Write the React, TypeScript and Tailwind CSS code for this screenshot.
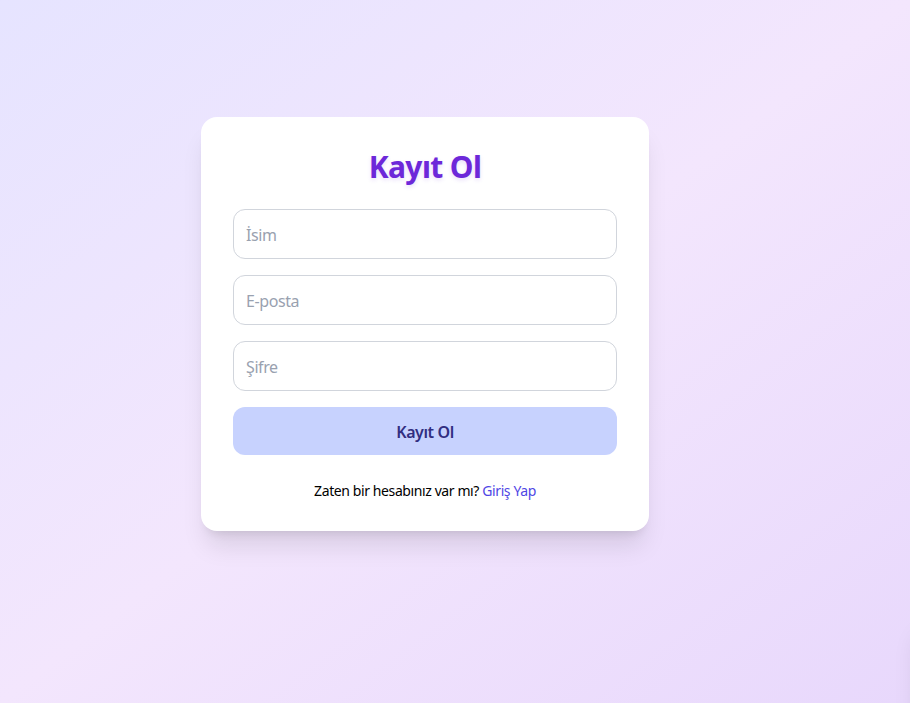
import React from "react";

export default function App() {
  return (
    <div
      className="min-h-screen w-full bg-gradient-to-br from-[#e6e4ff] via-[#f3e6fd] to-[#e8d8fc] flex items-start justify-start pl-[201px] pt-[117px] overflow-hidden relative tracking-[-0.025em]"
      style={{ fontFamily: '"Noto Sans", "Open Sans", sans-serif' }}
    >
      <div className="w-[448px] bg-white rounded-2xl shadow-xl px-8 pt-8 pb-[30px]">
        <h1 className="text-3xl leading-9 font-bold text-center text-[#6d28d9] mb-6 tracking-[-0.02em] [text-shadow:0_2px_4px_rgba(109,40,217,0.15)]">
          Kayıt Ol
        </h1>
        <form className="flex flex-col gap-4" onSubmit={(e) => e.preventDefault()}>
          <input
            type="text"
            placeholder="İsim"
            className="w-full border border-gray-300 rounded-xl px-3 pt-[13px] pb-[11px] text-base leading-6 tracking-[-0.025em] placeholder-gray-400 outline-none"
          />
          <input
            type="email"
            placeholder="E-posta"
            className="w-full border border-gray-300 rounded-xl px-3 pt-[13px] pb-[11px] text-base leading-6 tracking-[-0.025em] placeholder-gray-400 outline-none"
          />
          <input
            type="password"
            placeholder="Şifre"
            className="w-full border border-gray-300 rounded-xl px-3 pt-[13px] pb-[11px] text-base leading-6 tracking-[-0.025em] placeholder-gray-400 outline-none"
          />
          <button
            type="submit"
            className="w-full bg-[#c7d2fe] text-[#312e81] font-semibold rounded-xl pt-[13px] pb-[11px] text-base leading-6 tracking-[-0.025em]"
          >
            Kayıt Ol
          </button>
        </form>
        <p className="mt-[26px] text-center text-sm leading-5 text-black">
          Zaten bir hesabınız var mı?{" "}
          <a href="#" className="text-[#4f46e5]">
            Giriş Yap
          </a>
        </p>
      </div>
      <div className="absolute right-[-46px] top-[610px] w-[44px] h-[200px] rounded-2xl bg-white shadow-xl" />
    </div>
  );
}
